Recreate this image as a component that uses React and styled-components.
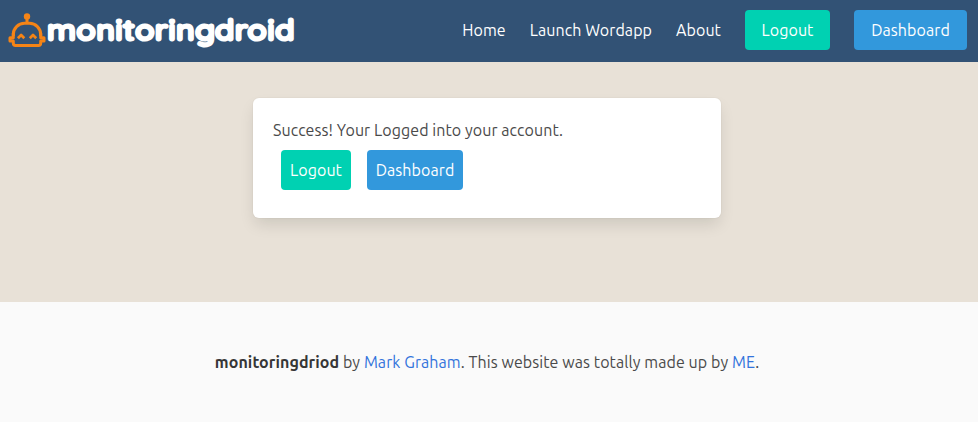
import React from 'react';
import styled, { createGlobalStyle } from 'styled-components';

const GlobalStyle = createGlobalStyle`
  *, *::before, *::after { box-sizing: border-box; }
  body {
    margin: 0;
    background: #fff;
    color: #4a4a4a;
    font: 400 16px/24px Ubuntu, "Noto Sans", sans-serif;
    letter-spacing: 0.08px;
  }
`;

const Page = styled.div`
  display: flex;
  flex-direction: column;
  min-height: 422px;
`;

const Navbar = styled.nav`
  display: flex;
  align-items: flex-start;
  justify-content: space-between;
  height: 62px;
  padding-right: 11px;
  background: #325275;
`;

const Brand = styled.a`
  display: flex;
  height: 62px;
`;

const NavMenu = styled.div`
  display: flex;
  align-items: center;
  gap: 24px;
  height: 60px;
`;

const NavLink = styled.a`
  color: #fff;
  text-decoration: none;
  white-space: nowrap;
`;

const Button = styled.button`
  display: flex;
  align-items: center;
  justify-content: center;
  width: ${(p) => p.$width}px;
  height: 40px;
  padding: 0;
  border: 0;
  border-radius: 4px;
  background: ${(p) => (p.$tone === 'primary' ? '#00d1b2' : '#3298dc')};
  color: #fff;
  font: inherit;
  letter-spacing: inherit;
`;

const Main = styled.main`
  height: 240px;
  padding: 36px 257px 0 253px;
  background: #e8e1d7;
`;

const Card = styled.section`
  height: 120px;
  padding: 20px;
  border-radius: 6px;
  background: #fff;
  box-shadow: 0 8px 16px -2px rgba(10, 20, 10, 0.12), 0 0 0 1px rgba(10, 10, 10, 0.02);
`;

const Message = styled.p`
  margin: 0;
`;

const Actions = styled.div`
  display: flex;
  gap: 16px;
  padding: 8px 8px 0;
`;

const Footer = styled.footer`
  display: flex;
  justify-content: center;
  height: 120px;
  padding: 48px 4px 0 0;
  background: #fafafa;
`;

const Credit = styled.p`
  margin: 0;
`;

const Strong = styled.strong`
  color: #363636;
  font-weight: 700;
`;

const FooterLink = styled.a`
  color: #3273dc;
  text-decoration: none;
`;

function Logo() {
  return (
    <svg width="302" height="62" viewBox="0 0 302 62" role="img" aria-label="monitoringdroid">
      <g fill="none" stroke="#f58416" strokeWidth="3" strokeLinejoin="round">
        <path d="M27 17v6" />
        <path d="M13.3 36v-1.5a11.2 11.2 0 0 1 11.2-11.2h5a11.2 11.2 0 0 1 11.2 11.2v1.5" />
        <path d="M13.3 33v4.7H10v3.2h3.3v2.3a2.2 2.2 0 0 0 2.2 2.2h23a2.2 2.2 0 0 0 2.2-2.2v-2.3H44v-3.2h-3.3V33" />
        <path d="M17.9 38.3l3.2-3.3 3.2 3.3M29.8 38.3l3.2-3.3 3.2 3.3" strokeWidth="2.7" />
      </g>
      <circle cx="27" cy="16.5" r="3.2" fill="#f58416" />
      <text
        x="47.2"
        y="40.4"
        textLength="248"
        lengthAdjust="spacingAndGlyphs"
        fontFamily="Quicksand, 'Varela Round', Ubuntu, sans-serif"
        fontSize="28.5"
        fontWeight="500"
        fill="#fff"
        stroke="#fff"
        strokeWidth="3.1"
        strokeLinejoin="round"
        strokeLinecap="round"
        letterSpacing="0.8"
      >
        monitoringdroid
      </text>
    </svg>
  );
}

export default function App() {
  return (
    <Page>
      <GlobalStyle />
      <Navbar>
        <Brand><Logo /></Brand>
        <NavMenu>
          <NavLink>Home</NavLink>
          <NavLink>Launch Wordapp</NavLink>
          <NavLink>About</NavLink>
          <Button $tone="primary" $width={85}>Logout</Button>
          <Button $tone="link" $width={113}>Dashboard</Button>
        </NavMenu>
      </Navbar>
      <Main>
        <Card>
          <Message>Success! Your Logged into your account.</Message>
          <Actions>
            <Button $tone="primary" $width={70}>Logout</Button>
            <Button $tone="link" $width={96}>Dashboard</Button>
          </Actions>
        </Card>
      </Main>
      <Footer>
        <Credit>
          <Strong>monitoringdriod</Strong> by <FooterLink>Mark Graham</FooterLink>. This website was totally made up by <FooterLink>ME</FooterLink>.
        </Credit>
      </Footer>
    </Page>
  );
}
